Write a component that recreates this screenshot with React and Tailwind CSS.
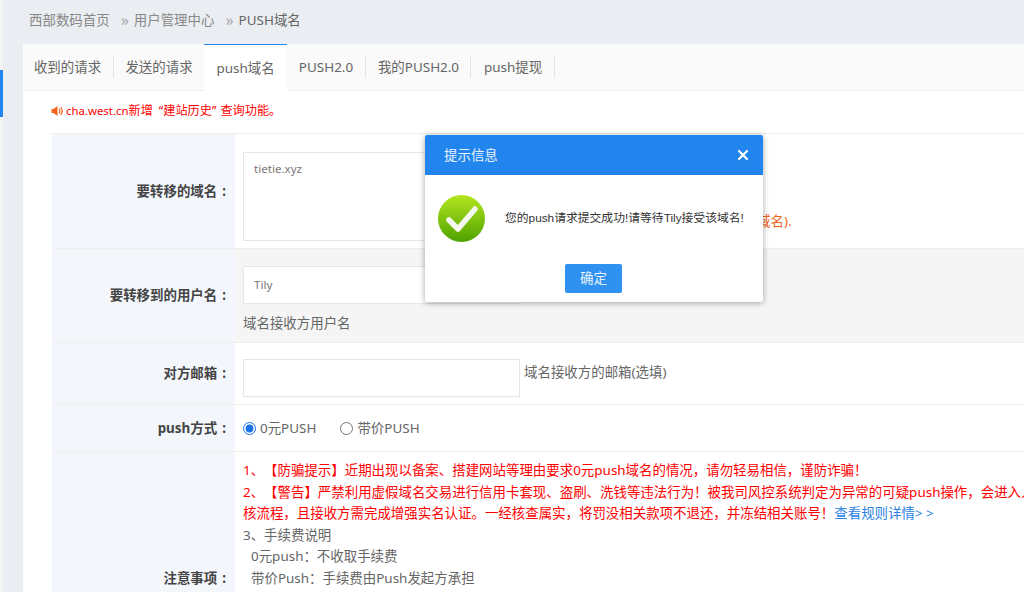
import { X } from "lucide-react";

const font = { fontFamily: '"Noto Sans", "Noto Sans CJK SC", sans-serif' };

const tabs = [
  { label: "收到的请求", w: "w-[91px] pr-[2px]", line: true },
  { label: "发送的请求", w: "w-[90px]" },
  { label: "push域名", w: "w-[83px]", active: true },
  { label: "PUSH2.0", w: "w-[79px] pr-[1px]", line: true },
  { label: "我的PUSH2.0", w: "w-[105px]", line: true },
  { label: "push提现", w: "w-[84px]", line: true },
];

function Speaker() {
  return (
    <svg width="12" height="12" viewBox="0 0 12 12" className="shrink-0">
      <path d="M0.5 4h2L6.5 1v10l-4-3h-2z" fill="#f0641e" />
      <path d="M8 3.5c1 1.4 1 3.6 0 5M9.8 2c1.6 2.3 1.6 5.7 0 8" stroke="#f0641e" strokeWidth="1.2" fill="none" />
    </svg>
  );
}

function CheckIcon() {
  return (
    <svg width="47" height="47" viewBox="0 0 47 47">
      <defs>
        <linearGradient id="ok" x1="0" y1="0" x2="0" y2="1">
          <stop offset="0%" stopColor="#b4e61e" />
          <stop offset="100%" stopColor="#4ea200" />
        </linearGradient>
      </defs>
      <circle cx="23.5" cy="23.5" r="23.5" fill="url(#ok)" />
      <path d="M11 25l9 9L37 14" stroke="#f4f8ee" strokeWidth="5.5" fill="none" strokeLinecap="round" strokeLinejoin="round" />
    </svg>
  );
}

function Row({ label, height, alt, children }) {
  return (
    <div className={`flex border-b border-[#eeeeee] ${height}`}>
      <div className="w-[183px] shrink-0 bg-[#f3f7fc] flex items-center justify-end pr-[9px] font-bold text-[#444444]">
        <span>{label}</span>
        <span className="ml-[5px]">:</span>
      </div>
      <div className={`flex-1 min-w-0 pl-2 ${alt ? "bg-[#f5f5f5]" : "bg-white"}`}>{children}</div>
    </div>
  );
}

export default function App() {
  return (
    <div style={font} className="relative w-[1024px] h-[592px] overflow-hidden bg-[#eaedf1] text-[13.45px] text-[#666666] flex [text-spacing-trim:space-all]">
      {/* left strip */}
      <div className="w-[3px] shrink-0 bg-[#f4f4f4] pt-[70px]">
        <div className="h-[47px] bg-[#2285ed]" />
      </div>

      <div className="flex-1 min-w-0 pl-5 flex flex-col">
        <div className="h-11 shrink-0 flex items-center pl-[6px] pb-[4px] text-[#888888]">
          <span>西部数码首页</span>
          <span className="ml-[11px] mr-[5px] text-[#aaaaaa] text-base leading-none">»</span>
          <span>用户管理中心</span>
          <span className="ml-[11px] mr-[5px] text-[#aaaaaa] text-base leading-none">»</span>
          <span className="text-[#666666]">PUSH域名</span>
        </div>

        <div className="flex-1 min-h-0 bg-white">
          <div className="h-[47px] flex bg-[#fafafa] border-b border-[#f2f2f2]">
            {tabs.map((t) => (
              <div
                key={t.label}
                className={`${t.w} h-[47px] shrink-0 flex items-center justify-center relative ${
                  t.active ? "bg-white border-t border-[#2285ed]" : "border-b border-[#eeeeee]"
                }`}
              >
                {t.label}
                {t.line && <span className="absolute right-0 top-[12px] h-[22px] w-px bg-[#e4e4e4]" />}
              </div>
            ))}
          </div>

          <div className="h-[42px] flex items-center gap-[3px] pl-[28px] pb-[2px] text-[12.2px] text-[#ff0000]">
            <Speaker />
            <span>
              <span className="text-[11.4px]">cha.west.cn</span>
              新增
              <span className="ml-[6px]">“</span>
              建站历史
              <span className="mr-[4px]">”</span>
              查询功能。
            </span>
          </div>

          <div className="ml-[29px] border-t border-[#eeeeee] whitespace-nowrap">
            <Row label="要转移的域名" height="h-[115px]">
              <div className="flex pt-[18px] h-full">
                <div className="w-[277px] h-[89px] shrink-0 border border-[#e6e6e6] px-[10px] py-[7px] text-[11.6px] text-[#777777]">
                  tietie.xyz
                </div>
                <span className="ml-[237px] mt-[59px] text-[#f0641e]">域名).</span>
              </div>
            </Row>
            <Row label="要转移到的用户名" height="h-[94px]" alt>
              <div className="pt-[17px]">
                <div className="w-[277px] h-[38px] bg-white border border-[#e6e6e6] px-[10px] flex items-center text-[11.6px] text-[#777777]">
                  Tily
                </div>
                <p className="mt-[9px]">域名接收方用户名</p>
              </div>
            </Row>
            <Row label="对方邮箱" height="h-[62px]">
              <div className="flex pt-[16px]">
                <div className="w-[277px] h-[38px] shrink-0 border border-[#e6e6e6]" />
                <span className="ml-1 mt-[3px]">域名接收方的邮箱(选填)</span>
              </div>
            </Row>
            <Row label="push方式" height="h-[47px]">
              <div className="flex items-center h-full">
                <input type="radio" name="push" defaultChecked className="m-0 w-[13px] h-[13px] accent-[#1a73e8]" />
                <span className="ml-[4px]">0元PUSH</span>
                <input type="radio" name="push" className="m-0 ml-[24px] w-[13px] h-[13px]" />
                <span className="ml-[4px]">带价PUSH</span>
              </div>
            </Row>
            <Row label="注意事项" height="h-[254px]">
              <div className="pt-[8px] leading-[21.6px]">
                <p className="text-[#ff0000]">1、【防骗提示】近期出现以备案、搭建网站等理由要求0元push域名的情况，请勿轻易相信，谨防诈骗！</p>
                <p className="text-[#ff0000]">2、【警告】严禁利用虚假域名交易进行信用卡套现、盗刷、洗钱等违法行为！被我司风控系统判定为异常的可疑push操作，会进入人工审</p>
                <p className="text-[#ff0000]">
                  核流程，且接收方需完成增强实名认证。一经核查属实，将罚没相关款项不退还，并冻结相关账号！
                  <span className="text-[#2a82e4]">查看规则详情&gt; &gt;</span>
                </p>
                <p>3、手续费说明</p>
                <p className="pl-2">0元push：不收取手续费</p>
                <p className="pl-2">带价Push：手续费由Push发起方承担</p>
              </div>
            </Row>
          </div>
        </div>
      </div>

      {/* dialog */}
      <div className="absolute left-[425px] top-[135px] w-[338px] h-[167px] bg-white rounded-[2px] shadow-[0_1px_6px_rgba(0,0,0,0.35)] flex flex-col">
        <div className="h-[40px] shrink-0 bg-[#2285ed] rounded-t-[2px] flex items-center justify-between pl-[19px] pr-[12px] text-white/90">
          <span>提示信息</span>
          <X size={16} strokeWidth={3.2} className="text-white" />
        </div>
        <div className="flex items-center pl-[13px] pt-[20px]">
          <CheckIcon />
          <span className="ml-[20px] text-[11.8px] text-[#333333] whitespace-nowrap font-['Liberation_Sans','Noto_Sans_CJK_SC',sans-serif]">
            您的push请求提交成功!请等待Tily接受该域名!
          </span>
        </div>
        <div className="flex justify-center pr-[1px] pt-[22px]">
          <div className="w-[57px] h-[29px] rounded-[2px] bg-[#3092f0] text-white/90 flex items-center justify-center">确定</div>
        </div>
      </div>
    </div>
  );
}
